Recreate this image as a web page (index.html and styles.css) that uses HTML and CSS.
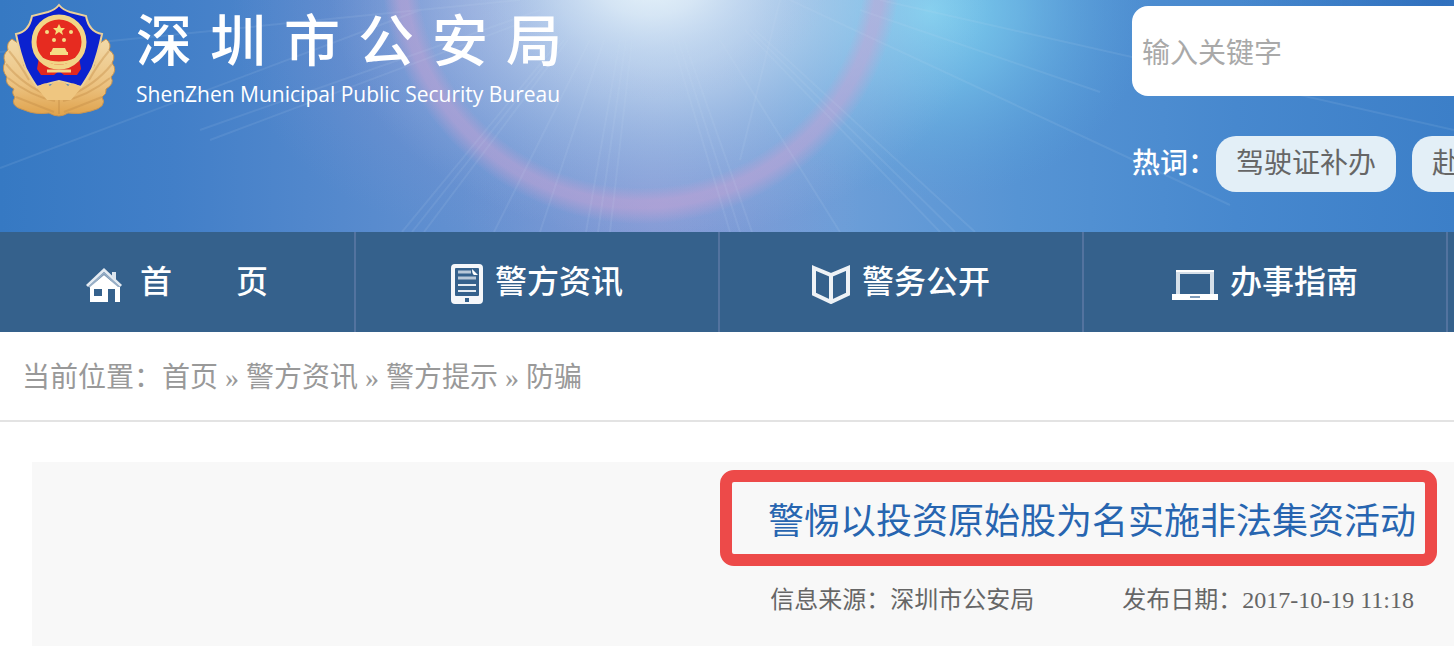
FILE: index.html
```
<!DOCTYPE html>
<html lang="zh-CN">
<head>
    <meta charset="UTF-8">
    <title>深圳市公安局</title>
    <link rel="stylesheet" href="styles.css">
</head>
<body>
    <header class="header">
        <svg class="header-bg" viewBox="0 0 1454 232" preserveAspectRatio="none" aria-hidden="true">
            <defs>
                <linearGradient id="sky" x1="0" y1="0" x2="1" y2="0">
                    <stop offset="0" stop-color="#3679c3"/>
                    <stop offset="0.12" stop-color="#427fc8"/>
                    <stop offset="0.28" stop-color="#5c8dcf"/>
                    <stop offset="0.45" stop-color="#789bd6"/>
                    <stop offset="0.58" stop-color="#6c9ed8"/>
                    <stop offset="0.7" stop-color="#5694d4"/>
                    <stop offset="0.85" stop-color="#4788ce"/>
                    <stop offset="1" stop-color="#3c7fc8"/>
                </linearGradient>
                <radialGradient id="sun">
                    <stop offset="0" stop-color="#e6f3fa" stop-opacity="0.95"/>
                    <stop offset="0.3" stop-color="#d6e6f5" stop-opacity="0.75"/>
                    <stop offset="0.65" stop-color="#b4cdec" stop-opacity="0.4"/>
                    <stop offset="1" stop-color="#9db8e4" stop-opacity="0"/>
                </radialGradient>
                <radialGradient id="cyan">
                    <stop offset="0" stop-color="#7fd3f0"/>
                    <stop offset="0.4" stop-color="#74c4ea" stop-opacity="0.65"/>
                    <stop offset="1" stop-color="#5aa5dc" stop-opacity="0"/>
                </radialGradient>
                <radialGradient id="violet">
                    <stop offset="0" stop-color="#9a9bd6" stop-opacity="0.5"/>
                    <stop offset="0.5" stop-color="#929ad5" stop-opacity="0.25"/>
                    <stop offset="1" stop-color="#8a97d4" stop-opacity="0"/>
                </radialGradient>
                <radialGradient id="corner">
                    <stop offset="0" stop-color="#2d6cbb" stop-opacity="0.8"/>
                    <stop offset="1" stop-color="#3576c1" stop-opacity="0"/>
                </radialGradient>
                <radialGradient id="ring" gradientUnits="userSpaceOnUse" cx="641" cy="-36" r="260">
                    <stop offset="0.86" stop-color="#c9a0d2" stop-opacity="0"/>
                    <stop offset="0.91" stop-color="#c8a2d4" stop-opacity="0.5"/>
                    <stop offset="0.94" stop-color="#c8a2d4" stop-opacity="0.5"/>
                    <stop offset="1" stop-color="#c9a0d2" stop-opacity="0"/>
                </radialGradient>
            </defs>
            <rect width="1454" height="232" fill="url(#sky)"/>
            <ellipse cx="1440" cy="0" rx="200" ry="90" fill="url(#corner)"/>
            <ellipse cx="470" cy="10" rx="240" ry="220" fill="url(#violet)"/>
            <ellipse cx="660" cy="210" rx="200" ry="110" fill="url(#violet)"/>
            <ellipse cx="930" cy="10" rx="220" ry="190" fill="url(#cyan)"/>
            <ellipse cx="660" cy="-10" rx="330" ry="250" fill="url(#sun)"/>
            <ellipse cx="650" cy="-20" rx="180" ry="120" fill="url(#sun)"/>
            <circle cx="641" cy="-36" r="260" fill="url(#ring)"/>
            <g stroke="#cfe6f8" stroke-opacity="0.1" stroke-width="2">
                <path d="M520 0L0 52M420 10L0 168M540 10L200 130M540 16L210 140"/>
                <path d="M560 40L402 232M564 40L412 232M568 40L424 232M590 40L494 232M604 40L540 232"/>
                <path d="M620 40L586 232M626 40L598 232M632 40L610 232M672 40L730 232M678 40L740 232M684 40L752 232"/>
                <path d="M720 40L840 232M745 30L940 232M750 30L955 232M755 30L975 232"/>
                <path d="M790 0L1230 205M860 10L1100 92M880 0L1454 130M780 0L740 160"/>
            </g>
        </svg>

        <a class="brand" href="#">
            <svg class="emblem" viewBox="0 0 116 120" aria-hidden="true">
                <defs>
                    <linearGradient id="gold" x1="0" y1="0" x2="0" y2="1">
                        <stop offset="0" stop-color="#f2d9a8"/>
                        <stop offset="0.6" stop-color="#ecc280"/>
                        <stop offset="1" stop-color="#dfa24c"/>
                    </linearGradient>
                </defs>
                <!-- 麦穗 -->
                <path class="emblem-leaf" d="M12 39L19 44L24 66L38 84L59 88L80 84L94 66L99 44L106 39Q112 44 109 50Q117 55 112 63Q118 70 111 77Q115 84 106 89Q107 94 102 97Q108 107 91 111Q79 115 68 113Q59 119 49 113Q35 115 24 110Q9 106 15 97Q11 93 14 89Q4 84 7 77Q1 70 5 62Q2 55 8 50Q6 43 12 39Z" fill="url(#gold)"/>
                <path class="emblem-vein" d="M9 51Q20 64 29 80M6 64Q24 86 50 96M8 78Q30 96 55 101M16 97Q36 105 54 112M109 51Q98 64 89 80M112 64Q94 86 68 96M110 78Q88 96 63 101M102 97Q82 105 64 112M59 90V114"/>
                <path d="M16 34Q29 32 32 16L48 12Q55 10 59 5Q63 10 70 12L86 16Q89 32 102 34Q98 54 92 69Q86 80 81 87L67 83L59 81L51 83L37 87Q32 80 26 69Q20 54 16 34Z" fill="#0b22cf" stroke="#ecd199" stroke-width="2"/>
                <path d="M39 57H79L81 69L77 75H64L59 71L54 75H41L37 69Z" fill="#e2281f"/>
                <circle cx="59" cy="42" r="25" fill="#e62b20" stroke="#f2d587" stroke-width="5"/>
                <path d="M59 24L61 28H65L62 31L63 35L59 32L55 35L56 31L53 28H57Z" fill="#f7df7a"/>
                <g fill="#f5dc85">
                    <circle cx="47" cy="32" r="2"/><circle cx="71" cy="32" r="2"/>
                    <circle cx="54" cy="40" r="2"/><circle cx="64" cy="40" r="2"/>
                    <path d="M53 48H65L67 52H51ZM50 52H68V55H50Z"/>
                </g>
                <path d="M42 59Q59 67 76 59" fill="none" stroke="#f2d587" stroke-width="3"/>
                <path d="M47 71H71" fill="none" stroke="#f2d587" stroke-width="3"/>
                <path d="M37 88Q45 80 50 86Q55 80 59 82Q63 80 68 86Q73 80 81 88L71 100H47Z" fill="#efc680"/>
            </svg>
            <span class="brand-text">
                <span class="brand-name"><span>深</span><span>圳</span><span>市</span><span>公</span><span>安</span><span>局</span></span>
                <span class="brand-en">ShenZhen Municipal Public Security Bureau</span>
            </span>
        </a>

        <form class="search">
            <input class="search-input" type="text" placeholder="输入关键字" aria-label="输入关键字">
            <div class="hot-words">
                <span class="hot-label">热词：</span>
                <a class="hot-tag" href="#">驾驶证补办</a>
                <a class="hot-tag" href="#">赴</a>
            </div>
        </form>
    </header>

    <nav class="nav">
        <a class="nav-item" href="#">
            <svg class="nav-icon" width="42" height="44" viewBox="0 0 42 44" aria-hidden="true">
                <path d="M26 13V12H30V20L26 16Z" fill="#dce5ee"/>
                <path d="M1 26L18 10L35 26" fill="none" stroke="#e4ebf2" stroke-width="3"/>
                <path d="M3 27L18 13L33 27" fill="none" stroke="#97aec6" stroke-width="2"/>
                <path d="M4 27L18 15L32 27H34V42H29V29H22V42H4ZM8 29V36H16V29Z" fill="#fff" fill-rule="evenodd"/>
            </svg>
            <span>首&emsp;&emsp;页</span>
        </a>
        <a class="nav-item" href="#">
            <svg class="nav-icon" width="32" height="44" viewBox="0 0 32 44" aria-hidden="true">
                <path d="M4 4H28Q32 4 32 8V40Q32 44 28 44H4Q0 44 0 40V8Q0 4 4 4ZM5 8Q4 8 4 9V35Q4 36 5 36H27Q28 36 28 35V9Q28 8 27 8ZM14 38V42H18V38Z" fill="#f5f7fa" fill-rule="evenodd"/>
                <path d="M7 12H20M7 18H25" stroke="#b9c8d8" stroke-width="3"/>
                <path d="M7 25H25M7 31H25" stroke="#e6ecf2" stroke-width="2"/>
                <path d="M21 9L27 15H23Q21 14 21 9Z" fill="#fff"/>
            </svg>
            <span>警方资讯</span>
        </a>
        <a class="nav-item" href="#">
            <svg class="nav-icon" width="38" height="44" viewBox="0 0 38 44" aria-hidden="true">
                <path d="M2 8L19 15L36 8V34L19 42L2 34ZM19 15V42" fill="none" stroke="#eef2f6" stroke-width="4"/>
            </svg>
            <span>警务公开</span>
        </a>
        <a class="nav-item" href="#">
            <svg class="nav-icon" width="46" height="44" viewBox="0 0 46 44" aria-hidden="true">
                <path d="M6 35V12H40V35" fill="none" stroke="#d5dfe9" stroke-width="4"/>
                <path d="M4 11H42" stroke="#fff" stroke-width="2"/>
                <path d="M0 34H46V40H0ZM18 36V38H28V36Z" fill="#fff" fill-rule="evenodd"/>
                <path d="M18 37H28" stroke="#7f9cba" stroke-width="2"/>
            </svg>
            <span>办事指南</span>
        </a>
    </nav>

    <div class="breadcrumb">
        当前位置：<a href="#">首页</a> » <a href="#">警方资讯</a> » <a href="#">警方提示</a> » <a href="#">防骗</a>
    </div>

    <article class="article">
        <h1 class="article-title">警惕以投资原始股为名实施非法集资活动</h1>
        <div class="article-meta">
            <span>信息来源：深圳市公安局</span>
            <span>发布日期：2017-10-19 11:18</span>
        </div>
    </article>
</body>
</html>
```

FILE: styles.css
```
* {
    box-sizing: border-box;
}
body {
    margin: 0;
    background-color: #fff;
    font-family: "Liberation Serif", "Noto Sans CJK SC", serif;
    font-size: 28px;
    overflow-x: hidden;
}
a {
    color: inherit;
    text-decoration: none;
}

/* 头部 */
.header {
    position: relative;
    display: flex;
    justify-content: space-between;
    min-height: 232px;
    overflow: hidden;
    background-color: #4a88cc;
}
.header-bg {
    position: absolute;
    top: 0;
    left: 0;
    width: 100%;
    height: 100%;
}
.brand {
    position: relative;
    display: flex;
    align-items: flex-start;
    gap: 20px;
    color: #fff;
}
.emblem {
    width: 116px;
    height: 120px;
}
.emblem-leaf {
    stroke: #c99450;
    stroke-width: 1;
}
.emblem-vein {
    fill: none;
    stroke: #c48b45;
    stroke-width: 2;
    stroke-opacity: 0.4;
}
.brand-text {
    display: flex;
    flex-direction: column;
    padding-top: 8px;
}
.brand-name {
    display: flex;
    gap: 18px;
    font-size: 56px;
    font-weight: 500;
    line-height: 68px;
}
.brand-en {
    font-family: "Open Sans", sans-serif;
    font-size: 21px;
    font-weight: 500;
    line-height: 36px;
}
.search {
    position: relative;
    flex: none;
    width: 322px;
    padding-top: 6px;
}
.search-input {
    display: block;
    width: 100%;
    height: 90px;
    padding: 6px 10px 0;
    border: none;
    border-radius: 16px 0 0 16px;
    background-color: #fff;
    color: #555;
    font-family: inherit;
    font-size: 28px;
}
.search-input::placeholder {
    color: #a9a9a9;
}
.hot-words {
    display: flex;
    margin-top: 40px;
    line-height: 56px;
    white-space: nowrap;
}
.hot-label {
    flex: none;
    color: #fff;
    font-weight: 500;
}
.hot-tag {
    flex: none;
    margin-right: 16px;
    padding: 0 20px;
    border-radius: 20px;
    background-color: #e3eff7;
    color: #666;
}

/* 导航 */
.nav {
    display: grid;
    grid-template-columns: 356fr repeat(3, 364fr) 6fr;
    background-color: #35618c;
    color: #fff;
    font-size: 32px;
}
.nav-item {
    display: flex;
    align-items: center;
    justify-content: center;
    gap: 12px;
    height: 100px;
    border-right: 2px solid #53739f;
    font-weight: 500;
    line-height: 44px;
    white-space: nowrap;
}
.nav-icon {
    flex: none;
}

/* 当前位置 */
.breadcrumb {
    padding: 4px 22px 0;
    border-bottom: 2px solid #e3e3e3;
    color: #999;
    line-height: 84px;
}

/* 文章 */
.article {
    display: flex;
    flex-direction: column;
    align-items: flex-end;
    margin: 40px 0 0 32px;
    padding: 8px 17px 28px;
    background-color: #f8f8f8;
}
.article-title {
    margin: 0;
    padding: 8px 9px 0 36px;
    border: 12px solid #ed4a49;
    border-radius: 14px;
    color: #2765b0;
    font-size: 36px;
    font-weight: normal;
    line-height: 64px;
}
.article-meta {
    display: flex;
    gap: 88px;
    margin: 16px 23px 0 0;
    color: #666;
    font-size: 24px;
    line-height: 36px;
}
```
